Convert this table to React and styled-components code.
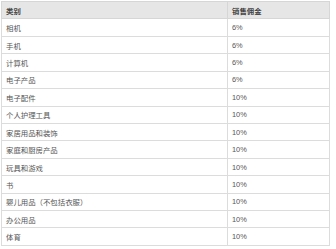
import React from "react";
import styled, { createGlobalStyle } from "styled-components";

const Global = createGlobalStyle`
  html, body { margin: 0; padding: 0; background: #fff; }
  body { font-family: "Liberation Sans", "Noto Sans CJK SC", sans-serif; }
`;

const Wrap = styled.div`
  padding: 1px 0 0 1px;
`;

const Table = styled.table`
  width: 329px;
  border-collapse: collapse;
  table-layout: fixed;
  font-size: 7.4px;
  color: #555;
`;

const Row = styled.tr`
  height: 17.43px;
`;

const HeadCell = styled.th`
  background: #e6e6e6;
  border: 1px solid #d6d6d6;
  text-align: left;
  font-weight: 700;
  color: #444;
  padding: 0 0 0 4px;
  width: ${(p) => p.$w || "auto"};
`;

const Cell = styled.td`
  border: 1px solid #dcdcdc;
  padding: 0 0 0 ${(p) => p.$pad || "4px"};
  white-space: nowrap;
`;

const rows = [
  ["相机", "6%"],
  ["手机", "6%"],
  ["计算机", "6%"],
  ["电子产品", "6%"],
  ["电子配件", "10%"],
  ["个人护理工具", "10%"],
  ["家居用品和装饰", "10%"],
  ["家庭和厨房产品", "10%"],
  ["玩具和游戏", "10%"],
  ["书", "10%"],
  ["婴儿用品（不包括衣服）", "10%"],
  ["办公用品", "10%"],
  ["体育", "10%"],
];

export default function App() {
  return (
    <>
      <Global />
      <Wrap>
        <Table>
          <thead>
            <Row>
              <HeadCell $w="221px">类别</HeadCell>
              <HeadCell>销售佣金</HeadCell>
            </Row>
          </thead>
          <tbody>
            {rows.map(([a, b]) => (
              <Row key={a}>
                <Cell>{a}</Cell>
                <Cell>{b}</Cell>
              </Row>
            ))}
          </tbody>
        </Table>
      </Wrap>
    </>
  );
}
